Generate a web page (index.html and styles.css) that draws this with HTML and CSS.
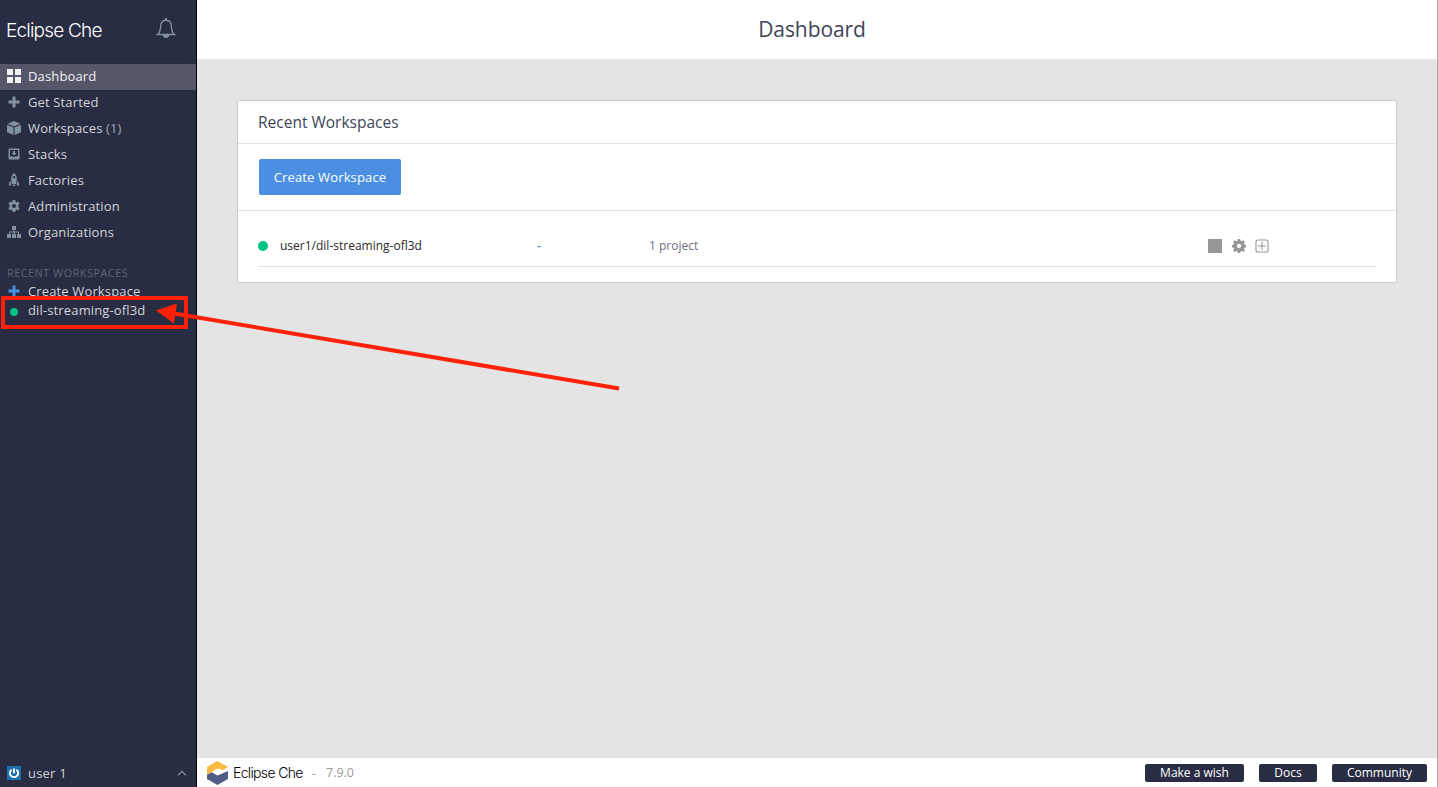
FILE: index.html
```html
<!DOCTYPE html>
<html lang="en">
<head>
<meta charset="utf-8">
<title>Eclipse Che | Dashboard</title>
<link rel="stylesheet" href="styles.css">
</head>
<body>
<div class="app">
  <aside class="sidebar">
    <div class="brand">
      <span class="wordmark">Eclipse Che</span>
      <svg class="bell" width="20" height="22" viewBox="0 0 20 22" fill="none" stroke="#8290a4" stroke-width="1.4"><path d="M1.5 17.5h17c-2.2-1.6-2.7-3-3-6.500C15.200 6 14.400 3.200 10 3.200S4.800 6 4.500 11c-.3 3.500-.8 4.900-3 6.500z"/><path d="M7.500 18a2.500 2.300 0 0 0 5 0z" fill="#8290a4"/><path d="M10 1v2" stroke-width="2"/></svg>
    </div>
    <nav class="nav">
      <a class="item active"><svg class="icon" viewBox="0 0 14 14"><path d="M0 0h6v6H0zM8 0h6v6H8zM0 8h6v6H0zM8 8h6v6H8z"/></svg>Dashboard</a>
      <a class="item"><svg class="icon" viewBox="0 0 14 14"><path d="M5.500 1.500h3v4h4v3h-4v4h-3v-4h-4v-3h4z"/></svg>Get Started</a>
      <a class="item"><svg class="icon" viewBox="0 0 14 14"><path d="M7 0l6.500 2.700L7 5.500.5 2.700zM0 3.700l6.500 2.800V14L0 11.200zM14 3.700v7.500L7.500 14V6.500z"/></svg>Workspaces <span class="count">(1)</span></a>
      <a class="item"><svg class="icon" viewBox="0 0 14 14"><path fill-rule="evenodd" d="M2.800 1.500h8.400q1.300 0 1.300 1.300v8.400q0 1.300-1.300 1.300H2.800q-1.300 0-1.300-1.300V2.800q0-1.300 1.300-1.300zM3 3v6.200h2.400q1.600 1.800 3.200 0H11V3zM6 4h2v2h1.600L7 8.600 4.400 6H6z"/></svg>Stacks</a>
      <a class="item"><svg class="icon" viewBox="0 0 14 14"><path fill-rule="evenodd" d="M7 0c2.200 1.700 3 3.800 2.700 6.500l-.6 4.500H4.900l-.6-4.500C4 3.800 4.800 1.700 7 0zM7 3a1.200 1.200 0 1 0 .01 0zM3.600 7.500l.7 4-2.300 2c-.1-2.600.3-4.500 1.600-6zM10.400 7.500l-.7 4 2.300 2c.1-2.600-.3-4.500-1.600-6zM5.500 11.500h3L8 13H6z"/></svg>Factories</a>
      <a class="item"><svg class="icon" viewBox="0 0 14 14"><path fill-rule="evenodd" d="M5.700 1h2.600l.3 1.700 1.100.6 1.600-.6 1.300 2.200L11.300 6v2l1.300 1.100-1.300 2.200-1.600-.6-1.100.6L8.300 13H5.700l-.3-1.700-1.100-.6-1.600.6-1.300-2.200L2.700 8V6L1.400 4.900l1.300-2.200 1.600.6 1.100-.6zM7 5a2 2 0 1 0 .01 0z"/></svg>Administration</a>
      <a class="item"><svg class="icon" viewBox="0 0 14 14"><path d="M5 1h4v4H7.500v1.500H12V9h2v4h-4V9h1V7.500H7.500V9H9v4H5V9h1.500V7.500H3V9h1v4H0V9h2V6.500h4.500V5H5z"/></svg>Organizations</a>
    </nav>
    <div class="recent">
      <div class="recent-title">RECENT WORKSPACES</div>
      <a class="recent-item"><svg class="icon add" viewBox="0 0 14 14"><path d="M5.500 1.500h3v4h4v3h-4v4h-3v-4h-4v-3h4z"/></svg>Create Workspace</a>
      <a class="recent-item running"><i class="small-dot"></i>dil-streaming-ofl3d</a>
    </div>
    <div class="user">
      <svg class="icon" viewBox="0 0 14 14"><path fill="#1d70ab" d="M0 0h14v14H0z"/><path d="M4.700 3.700a4.100 4.100 0 1 0 4.800.1M7 2.500v4.700" fill="none" stroke="#fff" stroke-width="1.900"/></svg>
      <span>user 1</span>
      <svg class="chevron" width="10" height="6" viewBox="0 0 10 6"><path d="M1 5.300l4-4 4 4" fill="none" stroke="#8b93a5" stroke-width="1.200"/></svg>
    </div>
  </aside>

  <div class="content">
    <header class="header"><h1>Dashboard</h1></header>
    <main class="main">
      <section class="card">
        <h2>Recent Workspaces</h2>
        <div class="toolbar"><button class="create">Create Workspace</button></div>
        <div class="list">
          <div class="row">
            <i class="dot"></i>
            <span class="name">user1/dil-streaming-ofl3d</span>
            <span class="stack">-</span>
            <span class="projects">1 project</span>
            <span class="actions">
              <svg width="14" height="14" viewBox="0 0 14 14"><path d="M0 0h14v14H0z" fill="#979797"/></svg>
              <svg width="14" height="14" viewBox="0 0 14 14" fill="#979797"><path fill-rule="evenodd" d="M5.800 0h2.400l.4 1.800 1.100.4 1.600-1 1.600 1.600-1 1.600.4 1.100 1.700.4v2.400l-1.700.4-.4 1.100 1 1.600-1.600 1.600-1.600-1-1.100.4L8.200 14H5.800l-.4-1.600-1.100-.4-1.600 1-1.600-1.600 1-1.600-.4-1.100L0 8.300V5.900l1.700-.4.400-1.100-1-1.600 1.600-1.600 1.600 1 1.100-.4zM7 4.800a2.200 2.200 0 1 0 .01 0z"/></svg>
              <svg width="14" height="14" viewBox="0 0 14 14" fill="none" stroke="#979797" stroke-width="1.100"><rect x="1" y="1" width="12" height="12" rx="2"/><path d="M7 3v8M3 7h8"/></svg>
            </span>
          </div>
        </div>
      </section>
    </main>
    <footer class="footer">
      <svg width="21" height="24" viewBox="0 0 21 24"><path fill="#fdb940" d="M0 13.800V6L10.500 0 21 6l-4.800 2.900-5.700-1.300z"/><path fill="#525c86" d="M0 13.800l4.600-2.500 5.900 3.200L21 10v8l-10.500 6L0 18z"/></svg>
      <span class="wordmark small">Eclipse Che</span>
      <span class="dash">-</span>
      <span class="version">7.9.0</span>
      <div class="links"><a class="wish">Make a wish</a><a class="docs">Docs</a><a class="community">Community</a></div>
    </footer>
  </div>
</div>
<svg class="annotation" width="640" height="400" viewBox="0 0 640 400"><rect x="3" y="298" width="183" height="29" fill="none" stroke="#ff2108" stroke-width="4"/><path d="M174 313.500L619 388.500" stroke="#ff2108" stroke-width="4"/><path d="M156 310.500L177 303.500 174 323.500z" fill="#ff2108"/></svg>
</body>
</html>
```
FILE: styles.css
```css
* { box-sizing: border-box; }
body { margin: 0; overflow: hidden; font-family: "Open Sans", "Noto Sans", sans-serif; font-size: 13px; }
h1, h2 { margin: 0; font-weight: 400; }
.app { display: flex; height: 787px; }
.sidebar { display: flex; flex-direction: column; width: 197px; background: #292d43; border-right: 1px solid #000; color: #d1d3d8; }
.brand { display: flex; justify-content: space-between; height: 59px; margin: 0 10px 5px 7px; padding: 17px 10px 0 0; border-bottom: 1px solid #23273b; }
.wordmark { font-family: Inter, "Liberation Sans", sans-serif; font-weight: 300; font-size: 19px; line-height: 28px; letter-spacing: -0.8px; white-space: nowrap; color: #fff; }
.brand .wordmark { margin-left: -1px; }
.nav { display: flex; flex-direction: column; }
.item { display: flex; align-items: center; height: 26px; padding: 0 0 2px 7px; letter-spacing: 0.14px; white-space: pre; }
.item.active { background: #555669; color: #f0f1f3; }
.icon { flex: none; width: 14px; height: 14px; margin-right: 7px; fill: #8290a4; }
.active .icon { fill: #f0f1f3; }
.count { color: #a0a6b4; }
.recent { padding: 18px 0 0 7px; }
.recent-title { height: 18px; line-height: 18px; font-size: 11px; letter-spacing: 0.42px; color: #5d6479; }
.recent-item { display: flex; align-items: center; height: 19px; padding-bottom: 2px; letter-spacing: 0.14px; }
.icon.add { fill: #4a90e2; }
.small-dot { width: 8px; height: 8px; margin: 4px 10px 0 3px; border-radius: 50%; background: #00c483; }
.user { display: flex; align-items: center; height: 28px; margin-top: auto; padding: 0 9px 1px 7px; letter-spacing: 0.2px; }
.chevron { margin-left: auto; }
.content { display: flex; flex: 1; flex-direction: column; min-width: 0; border-right: 1px solid #aaa; background: #e4e4e4; }
.header { height: 59px; background: #fff; text-align: center; }
.header h1 { padding-right: 10px; font-size: 21px; line-height: 59px; letter-spacing: -0.08px; color: #3e4557; }
.main { flex: 1; padding: 41px 40px 0; }
.card { height: 183px; border: 1px solid #ccc; border-radius: 2px; background: #fff; }
.card h2 { height: 43px; padding-left: 20px; border-bottom: 1px solid #e3e3e3; font-size: 15.5px; line-height: 42px; color: #3e4557; }
.toolbar { height: 67px; padding: 15px 21px; border-bottom: 1px solid #e3e3e3; }
.create { width: 142px; height: 36px; padding: 0; border: 0; border-radius: 2px; background: #4a8fe1; color: #fff; font: inherit; letter-spacing: 0.14px; }
.list { padding: 14px 20px 0; }
.row { display: grid; grid-template-columns: 22px 257px 112px 559px auto; align-items: center; height: 42px; border-bottom: 1px solid #e3e3e3; font-size: 12px; color: #6b717f; }
.dot { width: 10px; height: 10px; border-radius: 50%; background: #00c483; }
.name { color: #292929; }
.stack { color: #4a90e2; font-weight: 600; }
.actions { display: flex; gap: 10px; }
.actions svg:last-child { margin-left: -1px; }
.footer { display: flex; align-items: center; height: 29px; padding: 0 10px; background: #fff; }
.wordmark.small { margin-left: 5px; font-size: 14px; letter-spacing: -0.65px; color: #000; }
.dash { margin-left: 9px; color: #a0a0a0; }
.version { margin-left: 10px; font-size: 12.500px; color: #999; }
.links { display: flex; gap: 15px; margin-left: auto; }
.links a { height: 18px; border-radius: 2px; background: #292d43; color: #fff; font-size: 12px; line-height: 17px; text-align: center; }
.wish { width: 99px; }
.docs { width: 58px; }
.community { width: 95px; }
.annotation { position: absolute; top: 0; left: 0; pointer-events: none; }
```
